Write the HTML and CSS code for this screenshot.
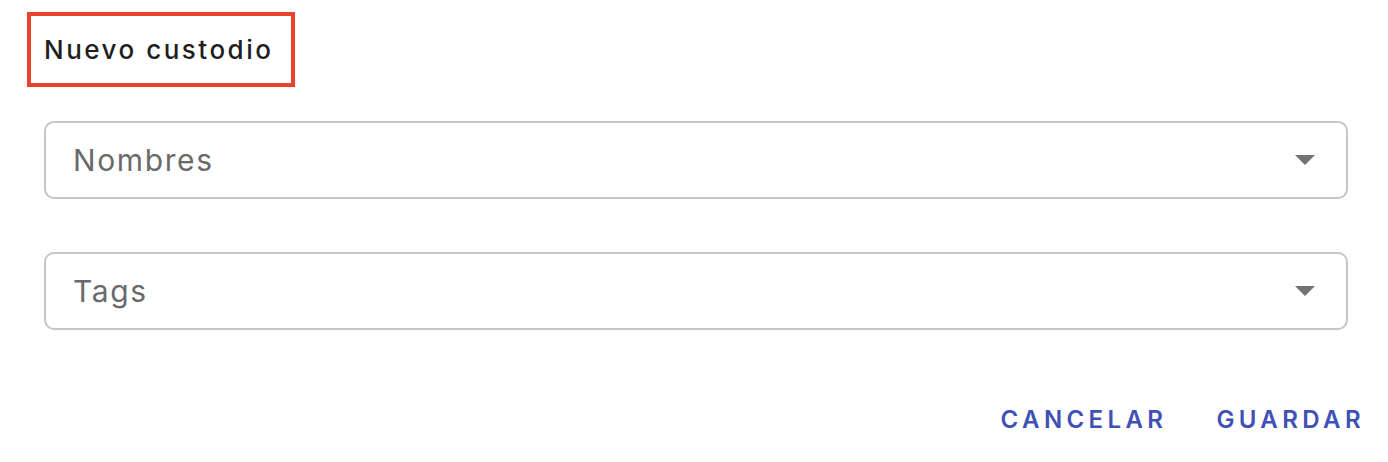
FILE: index.html
```html
<!DOCTYPE html>
<html lang="es">
<head>
<meta charset="utf-8">
<title>Nuevo custodio</title>
<link rel="stylesheet" href="styles.css">
</head>
<body>
<div class="dialog">
  <div class="title-box"><h2 class="title">Nuevo custodio</h2></div>
  <div class="fields">
    <div class="field">
      <span class="placeholder">Nombres</span>
      <span class="arrow"></span>
    </div>
    <div class="field">
      <span class="placeholder">Tags</span>
      <span class="arrow"></span>
    </div>
  </div>
  <div class="actions">
    <button class="btn">CANCELAR</button>
    <button class="btn">GUARDAR</button>
  </div>
</div>
</body>
</html>
```

FILE: styles.css
```css
html, body {
  margin: 0;
  padding: 0;
  background: #ffffff;
}
.dialog {
  width: 1388px;
  height: 462px;
  box-sizing: border-box;
  padding-top: 12px;
  display: flex;
  flex-direction: column;
  font-family: "Inter", "Noto Sans", sans-serif;
}
.title-box {
  margin-left: 27px;
  width: 268px;
  height: 75px;
  box-sizing: border-box;
  border: 4px solid #e8432b;
  display: flex;
  align-items: center;
  padding-left: 13px;
}
.title {
  margin: 0;
  font-size: 26px;
  font-weight: 500;
  letter-spacing: 2.5px;
  color: #1f1f1f;
}
.fields {
  margin: 34px 40px 0 44px;
  display: flex;
  flex-direction: column;
  gap: 53px;
}
.field {
  height: 78px;
  box-sizing: border-box;
  border: 2px solid #c6c6c6;
  border-radius: 10px;
  display: flex;
  align-items: center;
  padding: 0 31px 0 27px;
}
.placeholder {
  flex: 1;
  font-size: 30px;
  letter-spacing: 1.6px;
  color: #6a6a6a;
}
.arrow {
  width: 0;
  height: 0;
  border-left: 10px solid transparent;
  border-right: 10px solid transparent;
  border-top: 10px solid #737373;
}
.actions {
  margin-top: 75px;
  margin-right: 23px;
  display: flex;
  justify-content: flex-end;
  gap: 49px;
}
.btn {
  border: 0;
  background: none;
  padding: 0;
  font-family: "Inter", "Noto Sans", sans-serif;
  font-size: 24px;
  font-weight: 600;
  letter-spacing: 4.4px;
  color: #3f51b5;
  cursor: pointer;
}
```
